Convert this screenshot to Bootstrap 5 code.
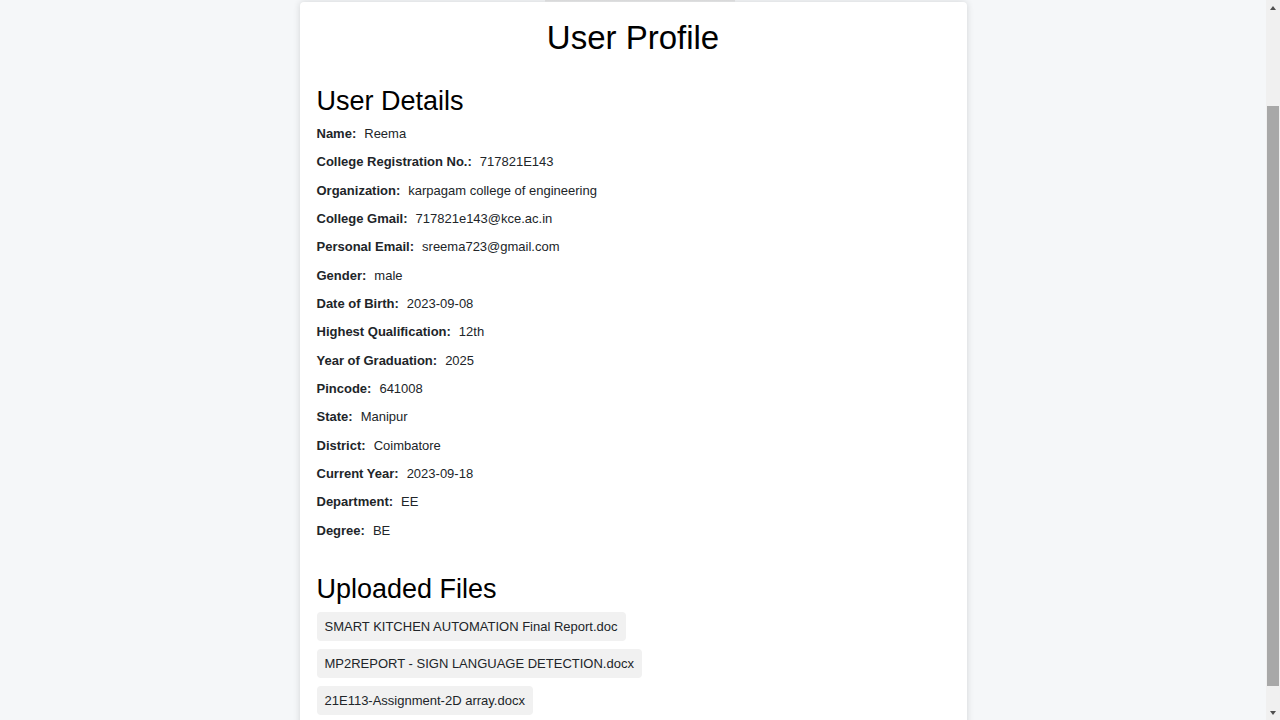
<!DOCTYPE html>
<html lang="en">
<head>
<meta charset="utf-8">
<meta name="viewport" content="width=device-width, initial-scale=1">
<title>User Profile</title>
<link href="https://cdn.jsdelivr.net/npm/bootstrap@5.3.0/dist/css/bootstrap.min.css" rel="stylesheet">
<style>
body { font-family: "Liberation Sans", Arial, sans-serif; font-size: 13px; line-height: 20px; background: #f5f7f9; color: #212529; }
.page-scroll { min-width: 0; }
.top-strip { padding-left: 14px; }
.top-edge { width: 190px; height: 2px; background: linear-gradient(#e0e0e1, #f0f1f2); }
.profile { max-width: 667px; padding: 16px 17px 24px; border-radius: 4px; box-shadow: 0 0 7px rgba(0, 0, 0, .14); }
.profile h1 { font-size: 33px; line-height: 40px; color: #000; }
.profile h2 { font-size: 27px; line-height: 30px; color: #000; }
.details { grid-auto-rows: 1fr; min-height: 425px; }
.details dt, .details dd { line-height: 20px; }
.uploads { padding-top: 29px; }
.file-link { padding: 5px 8px 4px; background: #f1f1f1; border-radius: 4px; color: #212529; }
.scroll-track { width: 14px; background: #f0f0f0; }
.scroll-thumb { width: 12px; background: #a8a8a8; flex: 580 1 0; }
.space-above { flex: 90 1 0; }
.space-below { flex: 18 1 0; }
</style>
</head>
<body class="d-flex vh-100 overflow-hidden">
<main class="page-scroll flex-grow-1 overflow-hidden">
  <div class="top-strip"><div class="top-edge mx-auto"></div></div>
  <section class="profile bg-white mx-auto">
    <h1 class="text-center fw-normal mb-4">User Profile</h1>
    <h2 class="fw-normal pt-1 mb-1">User Details</h2>
    <dl class="details d-grid mb-0">
      <div class="d-flex gap-2 pt-1"><dt>Name:</dt><dd class="mb-0">Reema</dd></div>
      <div class="d-flex gap-2 pt-1"><dt>College Registration No.:</dt><dd class="mb-0">717821E143</dd></div>
      <div class="d-flex gap-2 pt-1"><dt>Organization:</dt><dd class="mb-0">karpagam college of engineering</dd></div>
      <div class="d-flex gap-2 pt-1"><dt>College Gmail:</dt><dd class="mb-0">717821e143@kce.ac.in</dd></div>
      <div class="d-flex gap-2 pt-1"><dt>Personal Email:</dt><dd class="mb-0">sreema723@gmail.com</dd></div>
      <div class="d-flex gap-2 pt-1"><dt>Gender:</dt><dd class="mb-0">male</dd></div>
      <div class="d-flex gap-2 pt-1"><dt>Date of Birth:</dt><dd class="mb-0">2023-09-08</dd></div>
      <div class="d-flex gap-2 pt-1"><dt>Highest Qualification:</dt><dd class="mb-0">12th</dd></div>
      <div class="d-flex gap-2 pt-1"><dt>Year of Graduation:</dt><dd class="mb-0">2025</dd></div>
      <div class="d-flex gap-2 pt-1"><dt>Pincode:</dt><dd class="mb-0">641008</dd></div>
      <div class="d-flex gap-2 pt-1"><dt>State:</dt><dd class="mb-0">Manipur</dd></div>
      <div class="d-flex gap-2 pt-1"><dt>District:</dt><dd class="mb-0">Coimbatore</dd></div>
      <div class="d-flex gap-2 pt-1"><dt>Current Year:</dt><dd class="mb-0">2023-09-18</dd></div>
      <div class="d-flex gap-2 pt-1"><dt>Department:</dt><dd class="mb-0">EE</dd></div>
      <div class="d-flex gap-2 pt-1"><dt>Degree:</dt><dd class="mb-0">BE</dd></div>
    </dl>
    <div class="uploads">
      <h2 class="fw-normal mb-2">Uploaded Files</h2>
      <ul class="list-unstyled d-flex flex-column align-items-start gap-2 mb-0">
        <li class="d-flex"><a class="file-link text-decoration-none" href="#">SMART KITCHEN AUTOMATION Final Report.doc</a></li>
        <li class="d-flex"><a class="file-link text-decoration-none" href="#">MP2REPORT - SIGN LANGUAGE DETECTION.docx</a></li>
        <li class="d-flex"><a class="file-link text-decoration-none" href="#">21E113-Assignment-2D array.docx</a></li>
      </ul>
    </div>
  </section>
</main>
<aside class="scroll-track d-flex flex-column align-items-center flex-shrink-0" aria-hidden="true">
  <svg width="14" height="16" viewBox="0 0 14 16"><path d="M4 10h6L7 6z" fill="#505050"/></svg>
  <div class="space-above"></div>
  <div class="scroll-thumb"></div>
  <div class="space-below"></div>
  <svg width="14" height="16" viewBox="0 0 14 16"><path d="M4 7h6l-3 4z" fill="#505050"/></svg>
</aside>
<script src="https://cdn.jsdelivr.net/npm/bootstrap@5.3.0/dist/js/bootstrap.bundle.min.js"></script>
</body>
</html>
